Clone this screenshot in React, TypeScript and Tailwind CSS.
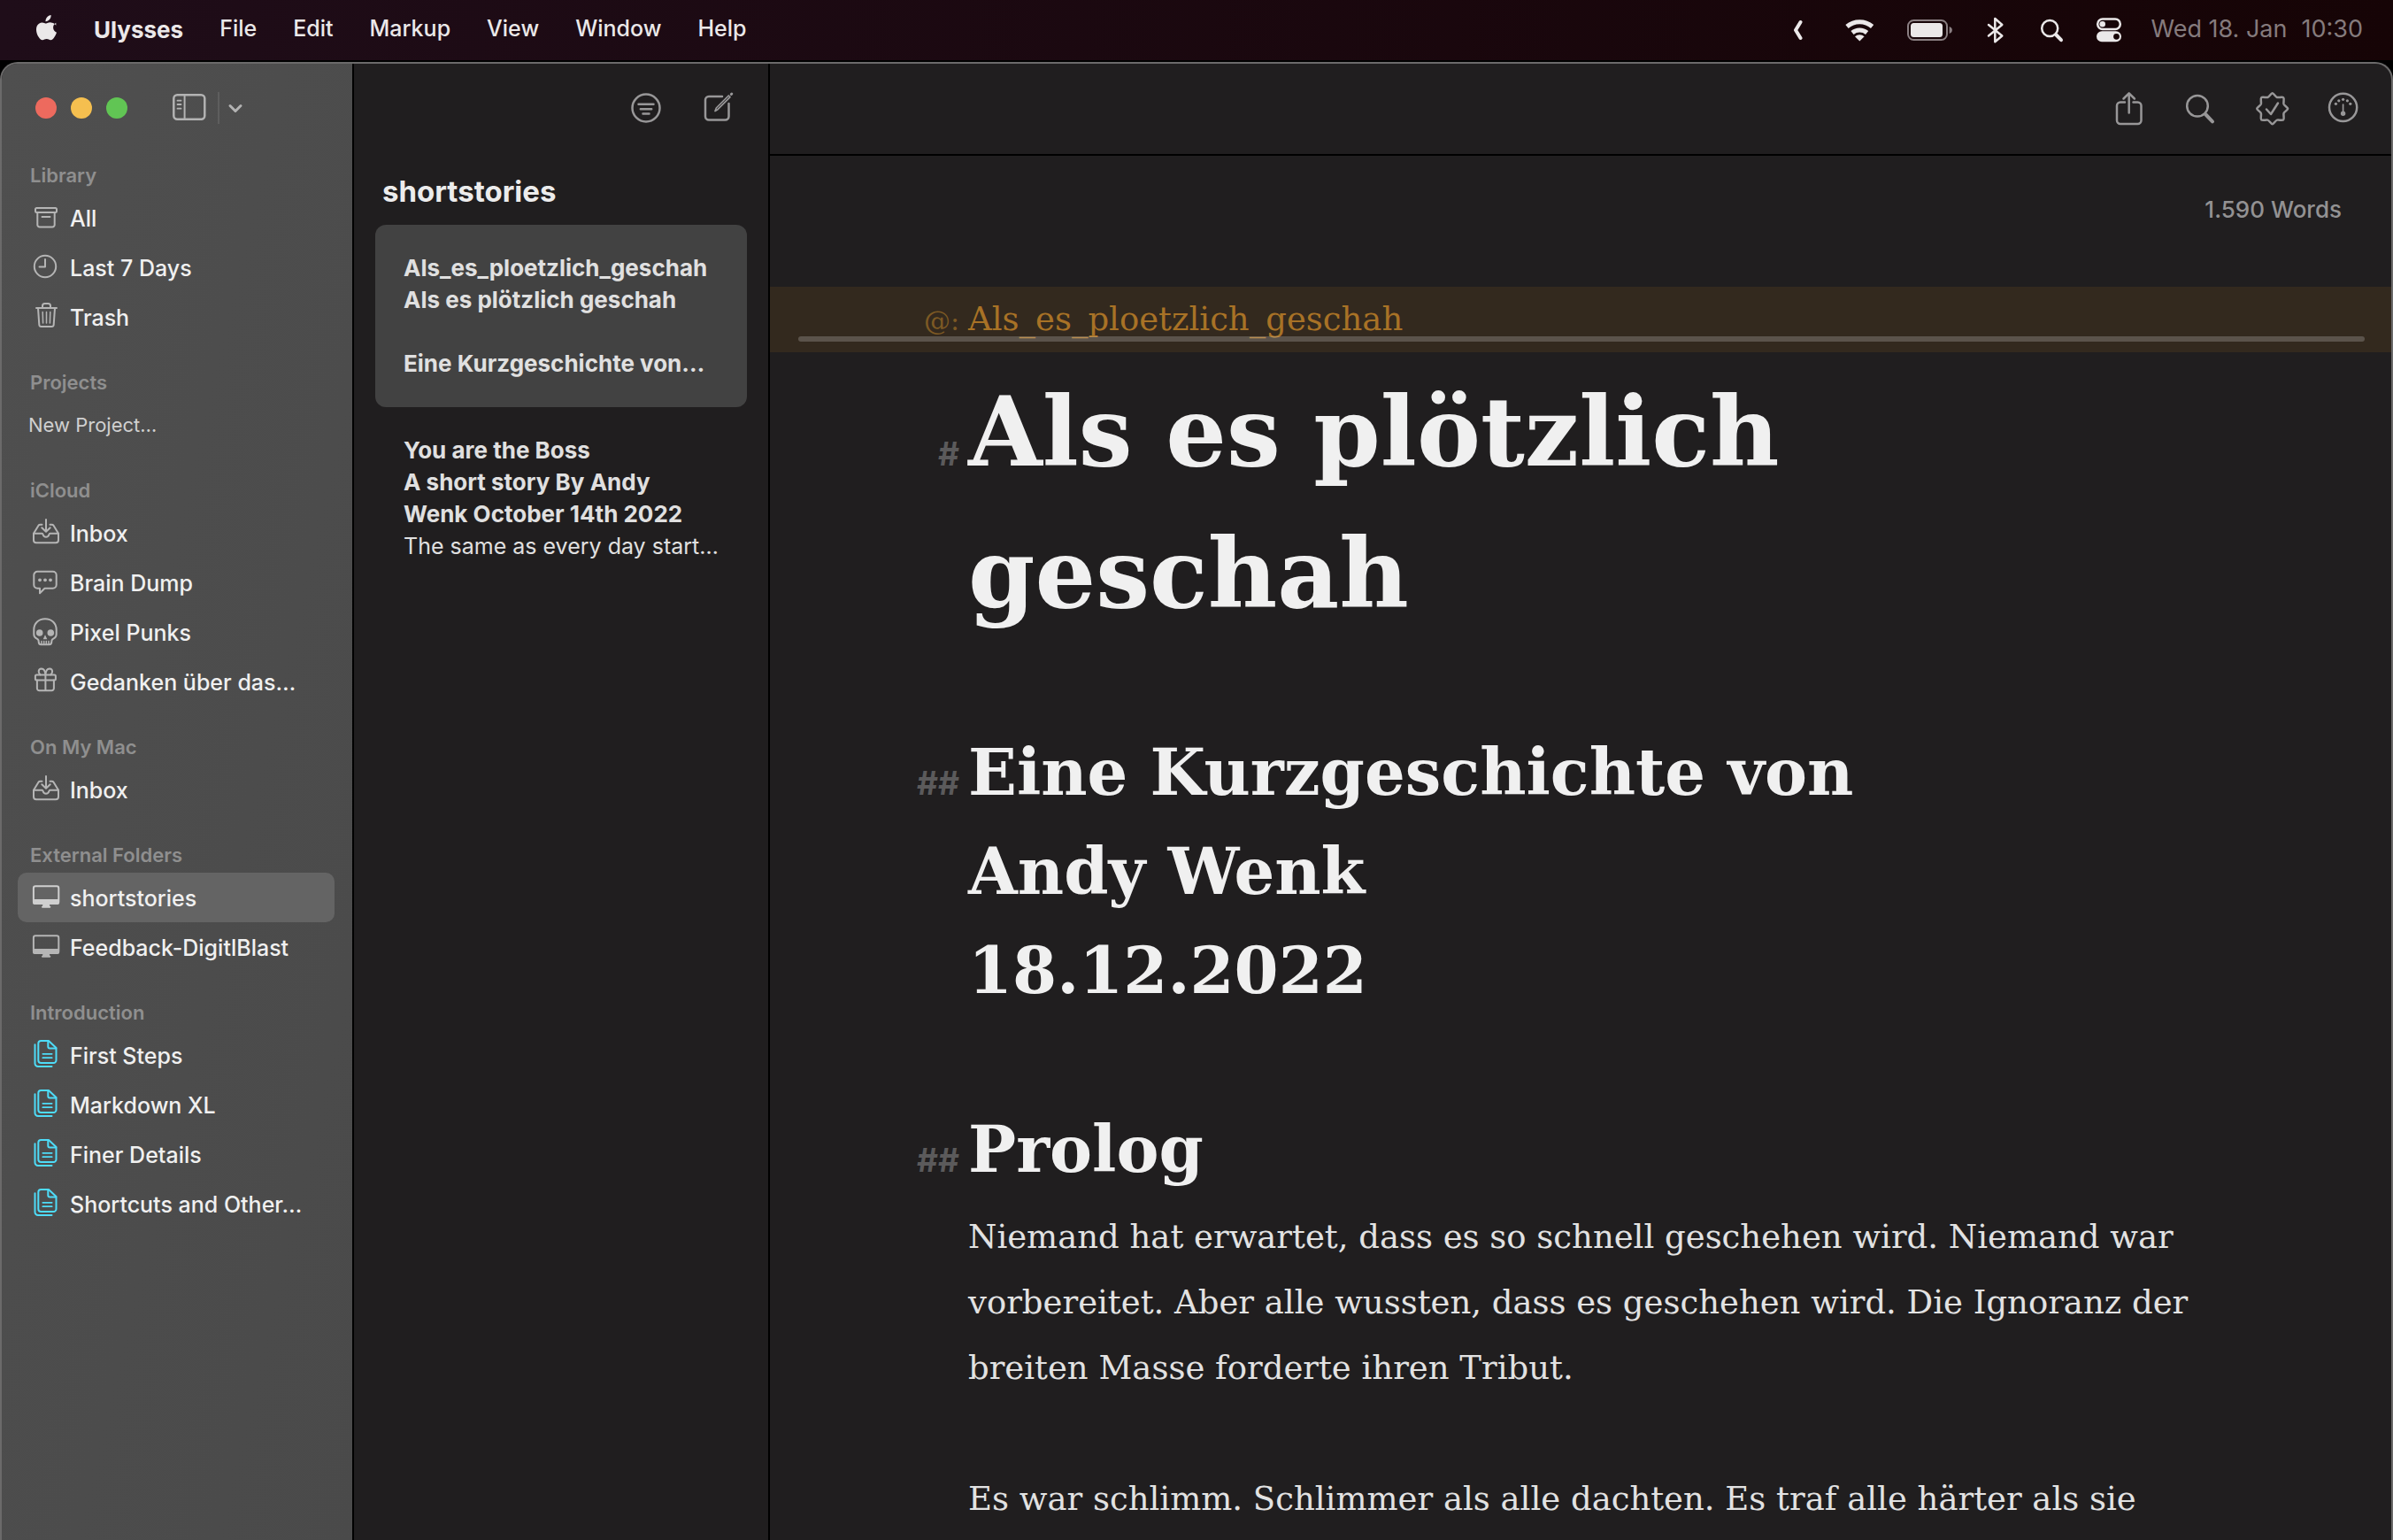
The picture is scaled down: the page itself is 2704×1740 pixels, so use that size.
import type { ReactNode } from "react";

function Glyph({ w, h, sw = 2, className = "", children }: { w: number; h: number; sw?: number; className?: string; children: ReactNode }) {
  return (
    <svg
      width={w}
      height={h}
      viewBox={`0 0 ${w} ${h}`}
      fill="none"
      stroke="currentColor"
      strokeWidth={sw}
      strokeLinecap="round"
      strokeLinejoin="round"
      aria-hidden="true"
      className={`shrink-0 ${className}`}
    >
      {children}
    </svg>
  );
}

/* Sidebar icons, 36 x 36 */

const ArchiveIcon = () => (
  <Glyph w={36} h={36}>
    <rect x="6" y="7" width="24" height="5" rx="1.5" />
    <path d="M8.3 12v14a2.5 2.5 0 0 0 2.5 2.5h14.4a2.5 2.5 0 0 0 2.5-2.5V12M13.5 17h9" />
  </Glyph>
);

const ClockIcon = () => (
  <Glyph w={36} h={36}>
    <circle cx="17" cy="17" r="12.2" />
    <path d="M17 9v8.5h-6.5" />
  </Glyph>
);

const TrashIcon = () => (
  <Glyph w={36} h={36}>
    <path d="M7 8h23M14 8V5.500a2.500 2.500 0 0 1 2.500-2.500h4a2.500 2.500 0 0 1 2.500 2.500V8M9 8l1.300 19a2.200 2.200 0 0 0 2.200 2h12a2.200 2.200 0 0 0 2.200-2L28 8" />
    <path d="M14.200 12.500l.4 12.500M18.500 12.500V25M22.800 12.500l-.4 12.500" strokeWidth="1.500" />
  </Glyph>
);

const InboxIcon = () => (
  <Glyph w={36} h={36}>
    <path d="M13.500 8.700h-2a2.500 2.500 0 0 0-2 1L4 18.700v7.500a3 3 0 0 0 3 3h22a3 3 0 0 0 3-3v-7.500l-5.500-9a2.500 2.500 0 0 0-2-1h-2" />
    <path d="M4 18.700h9.500c.8 0 .9.500 1.100 1.300.4 1.500 1.700 2.700 3.400 2.700s3-1.200 3.400-2.700c.2-.8.300-1.300 1.100-1.300H32" />
    <path d="M18 3v13.500M13.300 12.200l4.700 4.600 4.700-4.600" />
  </Glyph>
);

const BubbleIcon = () => (
  <Glyph w={36} h={36}>
    <path d="M8.300 5.800h17.400a4 4 0 0 1 4 4v11a4 4 0 0 1-4 4H16.500l-5.500 5.500v-5.500H8.300a4 4 0 0 1-4-4v-11a4 4 0 0 1 4-4z" />
    <g fill="currentColor" stroke="none">
      <circle cx="11" cy="15.300" r="1.900" />
      <circle cx="17" cy="15.300" r="1.900" />
      <circle cx="23" cy="15.300" r="1.900" />
    </g>
  </Glyph>
);

const SkullIcon = () => (
  <Glyph w={36} h={36}>
    <path d="M17 3.200c-7.700 0-12.700 5.300-12.700 12.300v5c0 2.700.6 3.500 2.500 4.500 1.700.9 2.500 1.300 2.700 2.500l.3 2.500c.2 1.400 1 2.200 2.400 2.200h9.600c1.400 0 2.200-.8 2.400-2.200l.3-2.500c.2-1.200 1-1.600 2.700-2.500 1.900-1 2.500-1.800 2.500-4.500v-5C29.700 8.500 24.700 3.200 17 3.200z" />
    <path d="M13 28.500v3.200M15.700 28.500v3.200M18.300 28.500v3.200M21 28.500v3.200" strokeWidth="1.500" />
    <g fill="currentColor" stroke="none">
      <circle cx="10.700" cy="19" r="3.800" />
      <circle cx="23.300" cy="19" r="3.800" />
      <path d="M17 21.300l2.300 5h-4.600z" />
    </g>
  </Glyph>
);

const GiftIcon = () => (
  <Glyph w={36} h={36}>
    <rect x="5.900" y="10.500" width="23" height="6" rx="1.500" />
    <path d="M7.900 16.500v9.300a2.500 2.500 0 0 0 2.500 2.500h14a2.500 2.500 0 0 0 2.500-2.500v-9.300M17.400 10.500v17.800" />
    <path d="M17.400 10.500C17 5.500 15.200 3.500 12.900 3.500a3.300 3.300 0 0 0-3.200 3.300c0 1.500.7 2.700 2 3.700M17.400 10.500c.4-5 2.200-7 4.500-7a3.300 3.300 0 0 1 3.200 3.300c0 1.500-.7 2.700-2 3.700" />
  </Glyph>
);

const MonitorIcon = () => (
  <Glyph w={36} h={36}>
    <rect x="3.900" y="5.200" width="28.400" height="19.800" rx="2.200" />
    <g fill="currentColor" stroke="none">
      <path d="M3 20h30v3.500a2.500 2.500 0 0 1-2.500 2.500h-25A2.500 2.500 0 0 1 3 23.500z" />
      <path d="M14.500 25h7.200l.5 3h-8.200z" />
      <rect x="13" y="27.800" width="10.300" height="2" rx="1" />
    </g>
  </Glyph>
);

const SheetsIcon = () => (
  <Glyph w={36} h={36} className="text-[#4edcf8]">
    <path d="M12.300 2h8.700l8.500 8v14a3 3 0 0 1-3 3H12.300a3 3 0 0 1-3-3V5a3 3 0 0 1 3-3z" />
    <path d="M20.300 2.300v6.200a2 2 0 0 0 2 2h7M5.500 6.300v21.200a3.500 3.500 0 0 0 3.500 3.500h15.500" />
    <path d="M14.300 16.800h10.400M14.300 21.200h10.400" strokeWidth="1.700" />
  </Glyph>
);

/* Toolbar icons, 48 x 48 */

const FilterIcon = () => (
  <Glyph w={48} h={48} sw={2.5}>
    <circle cx="24" cy="24" r="15.500" />
    <path d="M15.500 19.800h17M17.800 25.300h12.400M20.500 30.500h7" />
  </Glyph>
);

const ComposeIcon = () => (
  <Glyph w={48} h={48} sw={2.5}>
    <path d="M28 11H13a4 4 0 0 0-4 4v18.500a4 4 0 0 0 4 4h18.500a4 4 0 0 0 4-4V19" />
    <path d="M20 27.500l1.300-3.500 14-14 1.700 1.700-14 14z" strokeWidth="1.700" />
    <path d="M38.300 8.500l.5-.5" strokeWidth="3" />
  </Glyph>
);

const ShareIcon = () => (
  <Glyph w={48} h={48} sw={2.5}>
    <path d="M17 17.500h-5a4 4 0 0 0-4 4V38a4 4 0 0 0 4 4h19.500a4 4 0 0 0 4-4V21.500a4 4 0 0 0-4-4h-5" />
    <path d="M21.700 29.500V7.500M15.500 13.500l6.200-6.200 6.200 6.200" />
  </Glyph>
);

const SearchIcon = () => (
  <Glyph w={48} h={48} sw={2.5}>
    <circle cx="19" cy="21.700" r="11.800" />
    <path d="M28.500 31.500l7.500 7.800" strokeWidth="4" />
  </Glyph>
);

const SealIcon = () => (
  <Glyph w={48} h={48} sw={2.5}>
    <path d="M23.700 7.300c1.500 0 3.500 4.200 5.300 4.700 2 .5 6-.9 7.200.3s-.2 5.200.3 7.200c.5 1.800 4.700 3.800 4.700 5.300s-4.200 3.500-4.700 5.300c-.5 2 .9 6-.3 7.200s-5.200-.2-7.200.3c-1.800.5-3.800 4.700-5.300 4.700s-3.500-4.200-5.300-4.700c-2-.5-6 .9-7.200-.3s.2-5.200-.3-7.200c-.5-1.800-4.700-3.800-4.700-5.300s4.200-3.500 4.700-5.300c.5-2-.9-6 .3-7.200s5.200.2 7.200-.3c1.800-.5 3.800-4.700 5.300-4.700z" />
    <path d="M17 25.500l5 5.500 8-12.500" />
  </Glyph>
);

const GaugeIcon = () => (
  <Glyph w={48} h={48} sw={2.5}>
    <circle cx="23.600" cy="23.300" r="15.600" />
    <path d="M23.600 20v9" strokeWidth="1.700" />
    <g fill="currentColor" stroke="none">
      <circle cx="23.600" cy="30.300" r="2.700" />
      <circle cx="15.400" cy="19.300" r="1.600" />
      <circle cx="18.800" cy="15.800" r="1.600" />
      <circle cx="23.600" cy="14.300" r="1.600" />
      <circle cx="28.400" cy="15.800" r="1.600" />
      <circle cx="31.800" cy="19.300" r="1.600" />
    </g>
  </Glyph>
);

const SidebarIcon = () => (
  <Glyph w={40} h={48} sw={2.5}>
    <rect x="2.300" y="9.300" width="35" height="27.500" rx="4" />
    <path d="M14.600 9.500v27" strokeWidth="2" />
    <path d="M6.500 15.700h4M6.500 20h4M6.500 24.700h4" strokeWidth="1.800" />
  </Glyph>
);

/* Menu bar icons */

const AppleLogo = () => (
  <svg width="26" height="34" viewBox="0 0 26 34" fill="currentColor" aria-hidden="true">
    <path d="M18.600 1c.2 1.900-.5 3.700-1.600 5-1.100 1.300-2.800 2.300-4.500 2.200-.2-1.800.6-3.700 1.600-4.800C15.200 2.100 17.100 1.100 18.600 1z" />
    <path d="M24.300 9.700c-2 1.200-3.200 3-3.200 5.300 0 2.700 1.600 4.800 3.900 5.700-.6 1.900-1.500 3.600-2.600 5.200-1.100 1.600-2.300 3.300-4.200 3.300s-2.300-1.100-4.500-1.100-2.900 1.100-4.600 1.200c-1.800.1-3.200-1.700-4.300-3.300-2.300-3.300-4-9.300-1.700-13.300 1.200-2 3.200-3.300 5.500-3.300 1.800 0 3.400 1.200 4.500 1.200s3.100-1.500 5.300-1.200c2.200.1 4.300.9 5.900 3.300z" />
  </svg>
);

const ChevronLeft = () => (
  <Glyph w={28} h={48} sw={4}>
    <path d="M10.500 16L5 25l5.500 9" />
  </Glyph>
);

const Wifi = () => (
  <Glyph w={38} h={48} sw={5}>
    <path d="M3 21a22 22 0 0 1 28.600 0M9 28a13 13 0 0 1 16.600 0" strokeLinecap="butt" />
    <path d="M17.300 37.500L12 32.300a7.700 7.700 0 0 1 10.600 0z" fill="currentColor" stroke="none" />
  </Glyph>
);

const Battery = () => (
  <Glyph w={58} h={48}>
    <rect x="2" y="14" width="44" height="22" rx="6.500" className="stroke-[#8a7f82]" />
    <rect x="5" y="17" width="36" height="16" rx="3.500" fill="currentColor" stroke="none" />
    <path d="M48.700 21c2 .7 3.200 2.200 3.200 4s-1.200 3.300-3.200 4z" stroke="none" className="fill-[#8a7f82]" />
  </Glyph>
);

const Bluetooth = () => (
  <Glyph w={28} h={48} sw={2.5}>
    <path d="M3 19l15.300 12.500-8 6.800V12l8 7L3 31.500" />
  </Glyph>
);

const MenuSearch = () => (
  <Glyph w={32} h={48} sw={2.5}>
    <circle cx="12.200" cy="23" r="9" />
    <path d="M19.500 30.500l5.500 5.700" strokeWidth="4" />
  </Glyph>
);

const ControlCentre = () => (
  <Glyph w={30} h={48} sw={2.5}>
    <rect x="2.200" y="12.500" width="25.600" height="11.500" rx="5.700" />
    <circle cx="7.700" cy="18.200" r="3.300" fill="currentColor" stroke="none" />
    <path
      fillRule="evenodd"
      stroke="none"
      fill="currentColor"
      d="M7 26.300h16a6 6 0 0 1 0 12H7a6 6 0 0 1 0-12zM23.500 28.900a3.400 3.400 0 1 0 0 6.800 3.400 3.400 0 0 0 0-6.800z"
    />
  </Glyph>
);

type Item = { label: string; icon: ReactNode; selected?: boolean };

const sections: { title: string; items: Item[]; action?: string }[] = [
  {
    title: "Library",
    items: [
      { label: "All", icon: <ArchiveIcon /> },
      { label: "Last 7 Days", icon: <ClockIcon /> },
      { label: "Trash", icon: <TrashIcon /> },
    ],
  },
  { title: "Projects", items: [], action: "New Project…" },
  {
    title: "iCloud",
    items: [
      { label: "Inbox", icon: <InboxIcon /> },
      { label: "Brain Dump", icon: <BubbleIcon /> },
      { label: "Pixel Punks", icon: <SkullIcon /> },
      { label: "Gedanken über das…", icon: <GiftIcon /> },
    ],
  },
  { title: "On My Mac", items: [{ label: "Inbox", icon: <InboxIcon /> }] },
  {
    title: "External Folders",
    items: [
      { label: "shortstories", icon: <MonitorIcon />, selected: true },
      { label: "Feedback-DigitlBlast", icon: <MonitorIcon /> },
    ],
  },
  {
    title: "Introduction",
    items: [
      { label: "First Steps", icon: <SheetsIcon /> },
      { label: "Markdown XL", icon: <SheetsIcon /> },
      { label: "Finer Details", icon: <SheetsIcon /> },
      { label: "Shortcuts and Other…", icon: <SheetsIcon /> },
    ],
  },
];

function MenuBar() {
  return (
    <header className="flex h-[68px] shrink-0 items-center justify-between bg-linear-to-r from-[#1f0d19] to-[#160406] pr-[34px] pb-0.5 pl-[39px] text-[25px] text-[#ebe8e9]">
      <nav className="flex items-center gap-[41px] font-medium" aria-label="Menu bar">
        <button aria-label="Apple">
          <AppleLogo />
        </button>
        <button className="text-[26px] font-bold">Ulysses</button>
        {["File", "Edit", "Markup", "View", "Window", "Help"].map((m) => (
          <button key={m}>{m}</button>
        ))}
      </nav>
      <div className="flex items-center gap-8">
        <button aria-label="Show more menu items"><ChevronLeft /></button>
        <button aria-label="Wi-Fi"><Wifi /></button>
        <button aria-label="Battery"><Battery /></button>
        <button aria-label="Bluetooth"><Bluetooth /></button>
        <button aria-label="Spotlight"><MenuSearch /></button>
        <button aria-label="Control Centre"><ControlCentre /></button>
        <time className="flex gap-4 text-[27px] text-[#857b7d]">
          <span>Wed 18. Jan</span>
          <span>10:30</span>
        </time>
      </div>
    </header>
  );
}

function Sidebar() {
  return (
    <aside className="w-[398px] shrink-0 border-r-2 border-black bg-linear-to-br from-[#4f4f4f] to-[#4a4a4a]">
      <div className="flex h-[100px] items-center pl-[38px] text-[#b3b3b3]">
        <div className="flex gap-4">
          <button aria-label="Close" className="size-6 rounded-full bg-[#ed6a5e]" />
          <button aria-label="Minimise" className="size-6 rounded-full bg-[#f5bf4f]" />
          <button aria-label="Zoom" className="size-6 rounded-full bg-[#61c554]" />
        </div>
        <button aria-label="Toggle sidebar" className="ml-[50px]">
          <SidebarIcon />
        </button>
        <span className="ml-3 h-9 w-0.5 bg-[#5e5e5e]" />
        <button aria-label="View options" className="ml-1.5">
          <Glyph w={24} h={24} sw={3}>
            <path d="M6 9.500l6 6 6-6" />
          </Glyph>
        </button>
      </div>
      <nav className="flex flex-col gap-[26px] pt-1.5 pr-5 pl-[18px]" aria-label="Library">
        {sections.map((s) => (
          <section key={s.title}>
            <h2 className="px-3.5 text-[22px] leading-10 font-semibold text-[#8f8f8f]">{s.title}</h2>
            {s.action && (
              <button className="block h-14 px-3 text-[22px] text-[#d0d0d0]">{s.action}</button>
            )}
            <ul>
              {s.items.map((it) => (
                <li key={it.label}>
                  <a
                    href="#"
                    aria-current={it.selected ? "page" : undefined}
                    className={`flex h-14 items-center gap-[9px] rounded-[10px] pl-3.5 text-[25px] font-medium whitespace-nowrap text-[#f0f0f0] ${it.selected ? "bg-[#646464]" : ""}`}
                  >
                    <span className={it.selected ? "text-[#cfcfcf]" : "text-[#b5b5b5]"}>{it.icon}</span>
                    <span className="pt-[3px]">{it.label}</span>
                  </a>
                </li>
              ))}
            </ul>
          </section>
        ))}
      </nav>
    </aside>
  );
}

function SheetList() {
  return (
    <section className="w-[470px] shrink-0 border-r-2 border-black text-[#e0e0e0]" aria-label="Sheets">
      <div className="flex h-[100px] items-center justify-end gap-[34px] pr-8 text-[#989798]">
        <button aria-label="Filter"><FilterIcon /></button>
        <button aria-label="New sheet"><ComposeIcon /></button>
      </div>
      <h2 className="mt-3 mb-1.5 px-8 text-[33px] leading-[64px] font-bold text-[#ececec]">shortstories</h2>
      <ul className="px-6 text-[26px] leading-9 font-bold whitespace-nowrap">
        <li className="rounded-xl bg-[#424242] px-8 py-[31px]">
          <p>Als_es_ploetzlich_geschah</p>
          <p>Als es plötzlich geschah</p>
          <p className="mt-9">Eine Kurzgeschichte von…</p>
        </li>
        <li className="px-8 py-[31px]">
          <p>You are the Boss</p>
          <p>A short story By Andy</p>
          <p>Wenk October 14th 2022</p>
          <p className="text-[25px] font-normal">The same as every day start…</p>
        </li>
      </ul>
    </section>
  );
}

function Block({ mark, className = "", children }: { mark?: string; className?: string; children: ReactNode }) {
  return (
    <div className={`grid grid-cols-[214px_minmax(0,1392px)] items-baseline gap-x-2.5 ${className}`}>
      <span className="text-right font-['Inter',sans-serif] text-[37px] font-bold text-[#5b5a5b]">{mark}</span>
      {children}
    </div>
  );
}

function Editor() {
  return (
    <main className="min-w-0 flex-1">
      <div className="flex h-[104px] items-center justify-end gap-8 border-b-2 border-black pr-[30px] pb-0.5 text-[#989798]">
        <button aria-label="Share"><ShareIcon /></button>
        <button aria-label="Search"><SearchIcon /></button>
        <button aria-label="Review"><SealIcon /></button>
        <button aria-label="Dashboard"><GaugeIcon /></button>
      </div>
      <p className="h-[148px] pt-[45px] pr-14 text-right text-[26px] leading-8 font-medium text-[#939293]">1.590 Words</p>
      <article className="font-['DejaVu_Serif',serif] text-[#f0f0f0]">
        <div className="relative bg-[#33291e]">
          <p className="grid h-[74px] grid-cols-[214px_1fr] items-baseline gap-x-2.5 text-[37px] leading-[74px] text-[#a87226]">
            <span className="text-right text-[30px] text-[#7d5924]">@:</span>
            <span>Als_es_ploetzlich_geschah</span>
          </p>
          <div className="absolute right-[30px] bottom-3 left-8 h-1.5 rounded-full bg-white/20" />
        </div>
        <Block mark="#" className="mt-2.5">
          <h1 className="text-[108px] leading-[160px] font-bold">Als es plötzlich geschah</h1>
        </Block>
        <Block mark="##" className="mt-[89px]">
          <h2 className="text-[72px] leading-[112px] font-bold">
            Eine Kurzgeschichte von
            <br />
            Andy Wenk
            <br />
            18.12.2022
          </h2>
        </Block>
        <Block mark="##" className="mt-[90px]">
          <h2 className="text-[72px] leading-[112px] font-bold">Prolog</h2>
        </Block>
        <Block className="mt-1.5 text-[37px] leading-[74px] text-[#e2e2e2]">
          <div className="space-y-[74px]">
            <p>
              Niemand hat erwartet, dass es so schnell geschehen wird. Niemand war vorbereitet. Aber alle wussten,
              dass es geschehen wird. Die Ignoranz der breiten Masse forderte ihren Tribut.
            </p>
            <p>Es war schlimm. Schlimmer als alle dachten. Es traf alle härter als sie</p>
          </div>
        </Block>
      </article>
    </main>
  );
}

export default function App() {
  return (
    <div className="flex min-h-screen flex-col bg-black font-['Inter',sans-serif]">
      <MenuBar />
      <div className="mt-0.5 flex flex-1 overflow-hidden rounded-t-[20px] border-2 border-b-0 border-[#6b6a6a] bg-[#201e1f]">
        <Sidebar />
        <SheetList />
        <Editor />
      </div>
    </div>
  );
}
